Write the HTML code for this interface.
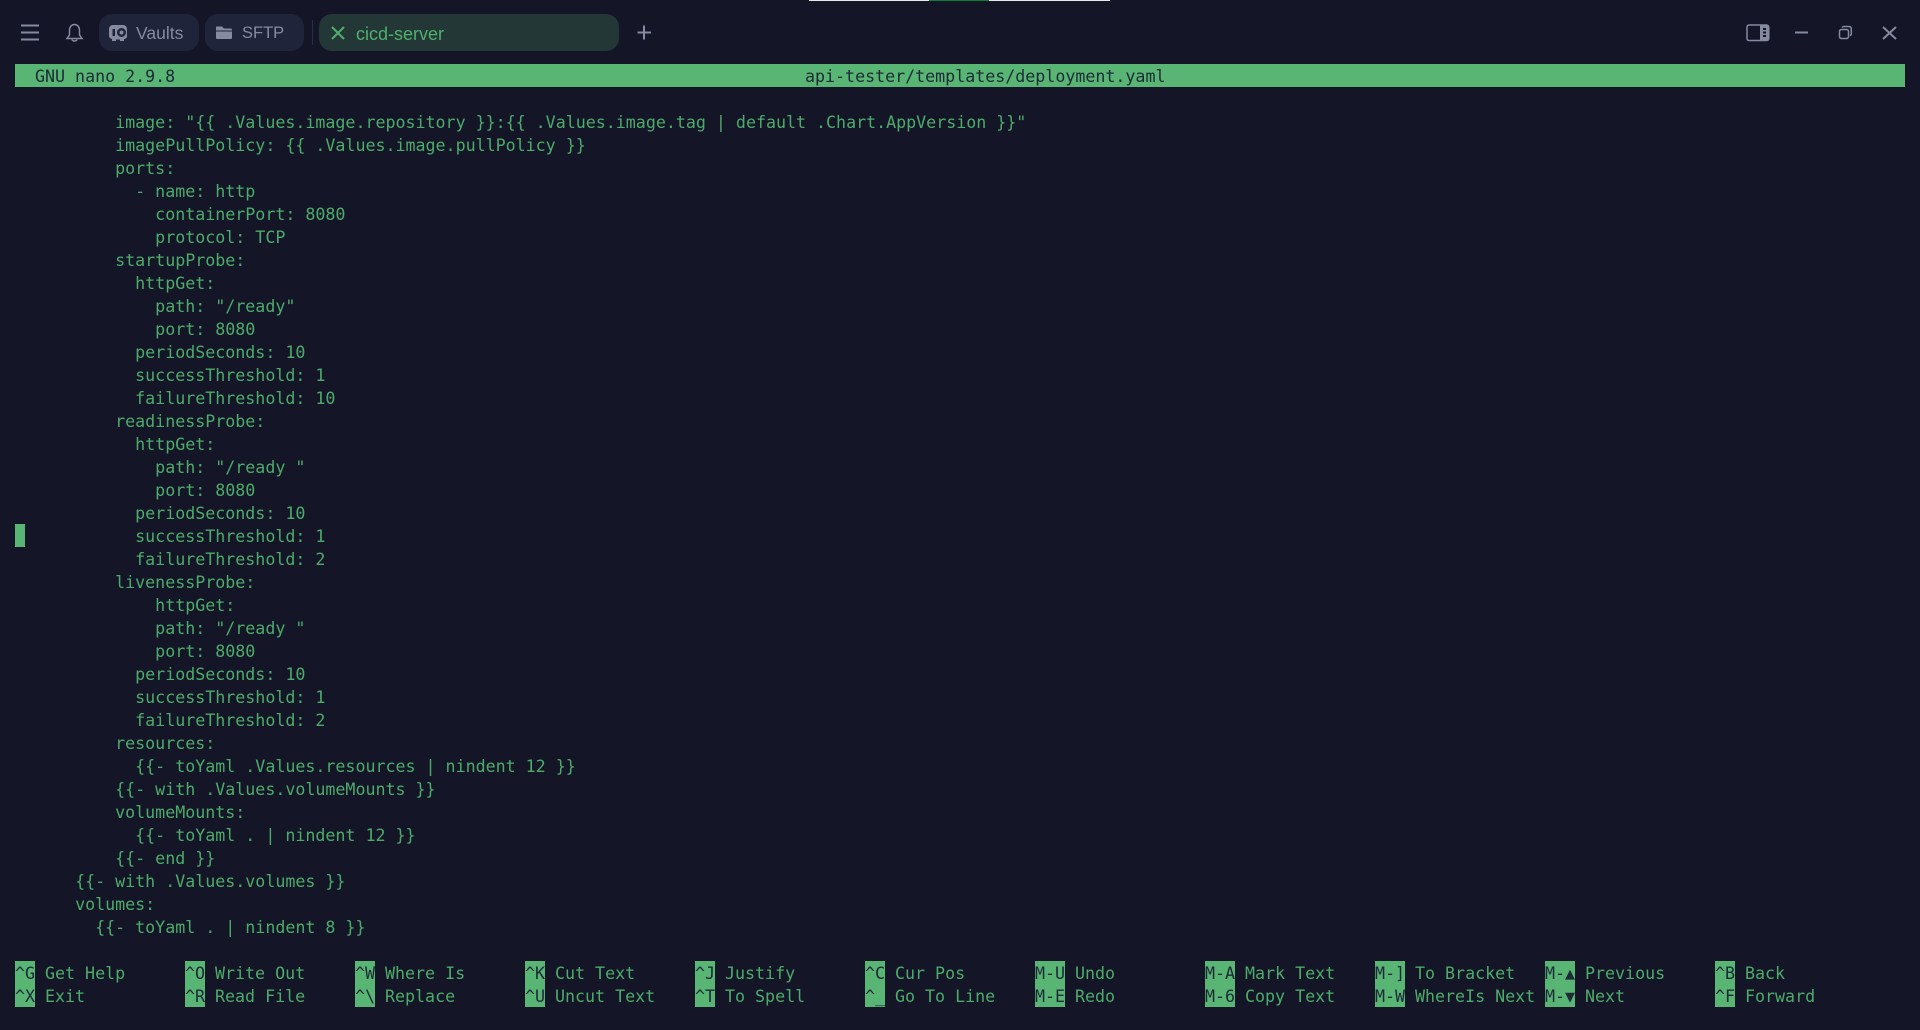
<!DOCTYPE html>
<html><head><meta charset="utf-8"><style>
html,body{margin:0;padding:0;background:#141628;width:1920px;height:1030px;overflow:hidden}
.a{position:absolute}
.tab{position:absolute;top:14px;height:37px;border-radius:13px;background:#20243a}
.tl{position:absolute;top:23px;font:16.5px/20px "Liberation Sans",sans-serif;color:#858aa0}
pre{position:absolute;margin:0;font:16.67px/23px "DejaVu Sans Mono","Liberation Mono",monospace;letter-spacing:-.015px;white-space:pre}
#t{left:15px;top:111px;color:#4cab69}
.bar{position:absolute;left:15px;top:64px;width:1890px;height:23px;background:#58b573}
.dk{color:#1d2a38}
.k{position:absolute;height:23px;background:#58b573;color:#1d2a38;font:16.67px/25px "DejaVu Sans Mono","Liberation Mono",monospace;letter-spacing:-.015px;white-space:pre;overflow:hidden}
.l{position:absolute;height:23px;color:#4cab69;font:16.67px/25px "DejaVu Sans Mono","Liberation Mono",monospace;letter-spacing:-.015px;white-space:pre}
svg{position:absolute;left:0;top:0}
</style></head><body>
<div class="a" style="left:809px;top:0;width:301px;height:1px;background:#e8e8e8"></div>
<div class="a" style="left:929px;top:0;width:60px;height:1px;background:#0a8035"></div>
<div class="tab" style="left:99px;width:100px"></div>
<div class="tab" style="left:205px;width:99px"></div>
<div class="a" style="left:312px;top:20px;width:1px;height:25px;background:#2a2e42"></div>
<div class="tab" style="left:319px;width:300px;background:#243737"></div>
<div class="tl" style="left:136px;font-size:17.5px">Vaults</div>
<div class="tl" style="left:242px;font-size:16.5px">SFTP</div>
<div class="tl" style="left:356px;top:24px;font-size:18px;color:#4fb06c">cicd-server</div>
<svg width="1920" height="60" fill="none" stroke="#858aa0" stroke-width="2">
<path d="M21 25.5H39M21 32.5H39M21 39.5H39"/>
<path stroke-width="1.5" d="M67 38.5H82L79.5 35V30.5C79.5 27 77.5 24.5 74.5 24.5S69.500 27 69.500 30.500V35ZM72 39.500C72.500 41.500 76.500 41.500 77 39.500"/>
<path fill="#858aa0" stroke="none" fill-rule="evenodd" d="M113 25H123C125.500 25 127 27 127 29V36C127 38 125.500 39 124 39V41H120V39.500H116V41H112V39C110 38.500 109 37.500 109 36V29C109 27 110.500 25 113 25ZM121.500 28A4.500 4.500 0 1 0 121.500 37A4.500 4.500 0 1 0 121.500 28ZM121.500 30.500A2 2 0 1 1 121.500 34.500A2 2 0 1 1 121.500 30.500ZM112.500 29H115V36H112.500Z"/>
<path fill="#858aa0" stroke="none" d="M216 27.500C216 26.800 216.500 26.500 217 26.500H222L224 28.500H231C231.600 28.500 232 29 232 29.500V30.500H216ZM216 31.500H232V38C232 38.600 231.500 39 231 39H217C216.400 39 216 38.600 216 38Z"/>
<path stroke="#4fb06c" stroke-width="2" d="M332 27L344 39M344 27L332 39"/>
<path d="M637.500 32.500H651M644 25.500V39.500"/>
<rect x="1747" y="25" width="21.500" height="15.500" rx="2" stroke-width="1.500"/>
<path fill="#858aa0" stroke="none" d="M1760 25H1767C1768.500 25 1769.500 26 1769.500 27.500V38.500C1769.500 40 1768.500 41 1767 41H1760Z"/>
<path stroke="#141628" stroke-width="2" d="M1763 29H1766M1763 32.500H1766M1763 36H1766"/>
<path d="M1795 32.500H1808"/>
<rect x="1839.500" y="29.500" width="9" height="9" rx="2" stroke-width="1.500"/>
<path stroke-width="1.500" d="M1842 27.500C1842.500 26.800 1843 26.500 1844 26.500H1849C1850.500 26.500 1851.300 27.300 1851.300 28.800V33.500C1851.300 34.500 1851 35.200 1850 35.700"/>
<path d="M1883 27L1896 39M1896 27L1883 39"/>
</svg>
<div class="bar"></div>
<pre class="dk" style="left:35px;top:65px">GNU nano 2.9.8</pre>
<pre class="dk" style="left:805px;top:65px">api-tester/templates/deployment.yaml</pre>
<div class="a" style="left:15px;top:524px;width:10px;height:23px;background:#58b573"></div>
<pre id="t">          image: "{{ .Values.image.repository }}:{{ .Values.image.tag | default .Chart.AppVersion }}"
          imagePullPolicy: {{ .Values.image.pullPolicy }}
          ports:
            - name: http
              containerPort: 8080
              protocol: TCP
          startupProbe:
            httpGet:
              path: "/ready"
              port: 8080
            periodSeconds: 10
            successThreshold: 1
            failureThreshold: 10
          readinessProbe:
            httpGet:
              path: "/ready "
              port: 8080
            periodSeconds: 10
            successThreshold: 1
            failureThreshold: 2
          livenessProbe:
              httpGet:
              path: "/ready "
              port: 8080
            periodSeconds: 10
            successThreshold: 1
            failureThreshold: 2
          resources:
            {{- toYaml .Values.resources | nindent 12 }}
          {{- with .Values.volumeMounts }}
          volumeMounts:
            {{- toYaml . | nindent 12 }}
          {{- end }}
      {{- with .Values.volumes }}
      volumes:
        {{- toYaml . | nindent 8 }}</pre>
<div class="k" style="left:15px;top:961px;width:20px">^G</div><div class="l" style="left:45px;top:961px">Get Help</div>
<div class="k" style="left:15px;top:984px;width:20px">^X</div><div class="l" style="left:45px;top:984px">Exit</div>
<div class="k" style="left:185px;top:961px;width:20px">^O</div><div class="l" style="left:215px;top:961px">Write Out</div>
<div class="k" style="left:185px;top:984px;width:20px">^R</div><div class="l" style="left:215px;top:984px">Read File</div>
<div class="k" style="left:355px;top:961px;width:20px">^W</div><div class="l" style="left:385px;top:961px">Where Is</div>
<div class="k" style="left:355px;top:984px;width:20px">^\</div><div class="l" style="left:385px;top:984px">Replace</div>
<div class="k" style="left:525px;top:961px;width:20px">^K</div><div class="l" style="left:555px;top:961px">Cut Text</div>
<div class="k" style="left:525px;top:984px;width:20px">^U</div><div class="l" style="left:555px;top:984px">Uncut Text</div>
<div class="k" style="left:695px;top:961px;width:20px">^J</div><div class="l" style="left:725px;top:961px">Justify</div>
<div class="k" style="left:695px;top:984px;width:20px">^T</div><div class="l" style="left:725px;top:984px">To Spell</div>
<div class="k" style="left:865px;top:961px;width:20px">^C</div><div class="l" style="left:895px;top:961px">Cur Pos</div>
<div class="k" style="left:865px;top:984px;width:20px">^_</div><div class="l" style="left:895px;top:984px">Go To Line</div>
<div class="k" style="left:1035px;top:961px;width:30px">M-U</div><div class="l" style="left:1075px;top:961px">Undo</div>
<div class="k" style="left:1035px;top:984px;width:30px">M-E</div><div class="l" style="left:1075px;top:984px">Redo</div>
<div class="k" style="left:1205px;top:961px;width:30px">M-A</div><div class="l" style="left:1245px;top:961px">Mark Text</div>
<div class="k" style="left:1205px;top:984px;width:30px">M-6</div><div class="l" style="left:1245px;top:984px">Copy Text</div>
<div class="k" style="left:1375px;top:961px;width:30px">M-]</div><div class="l" style="left:1415px;top:961px">To Bracket</div>
<div class="k" style="left:1375px;top:984px;width:30px">M-W</div><div class="l" style="left:1415px;top:984px">WhereIs Next</div>
<div class="k" style="left:1545px;top:961px;width:30px">M-▲</div><div class="l" style="left:1585px;top:961px">Previous</div>
<div class="k" style="left:1545px;top:984px;width:30px">M-▼</div><div class="l" style="left:1585px;top:984px">Next</div>
<div class="k" style="left:1715px;top:961px;width:20px">^B</div><div class="l" style="left:1745px;top:961px">Back</div>
<div class="k" style="left:1715px;top:984px;width:20px">^F</div><div class="l" style="left:1745px;top:984px">Forward</div>
</body></html>
